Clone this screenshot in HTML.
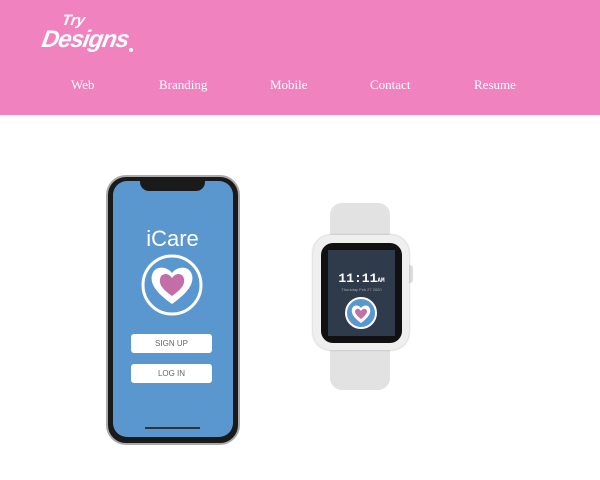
<!DOCTYPE html>
<html><head><style>
body{margin:0;width:600px;height:480px;background:#fff;font-family:"Liberation Serif",serif;overflow:hidden;position:relative}
.hdr{position:absolute;left:0;top:0;width:600px;height:115px;background:#f083bf}
.nav a{position:absolute;top:77px;color:#fff;font-size:13px;text-decoration:none}
.abs{position:absolute}
</style></head><body>
<div class="hdr">
<div class="abs" style="left:62px;top:12px;color:#fff;font:italic bold 15px 'Liberation Sans',sans-serif;transform:skew(-10deg)">Try</div>
<div class="abs" style="left:42px;top:26px;color:#fff;font:italic bold 24px 'Liberation Sans',sans-serif;letter-spacing:-1px;transform:skew(-10deg)">Designs</div>
<div class="abs" style="left:129px;top:48px;width:4px;height:4px;border-radius:50%;background:#fff"></div>
<div class="nav">
<a style="left:71px">Web</a><a style="left:159px">Branding</a><a style="left:270px">Mobile</a><a style="left:370px">Contact</a><a style="left:474px">Resume</a>
</div>
</div>
<!-- phone -->
<div class="abs" style="left:106px;top:175px;width:130px;height:266px;border-radius:20px;background:#1a1a1a;border:2px solid #aaa"></div>
<div class="abs" style="left:113px;top:181px;width:120px;height:256px;border-radius:14px;background:#5b97cf"></div>
<div class="abs" style="left:140px;top:180px;width:65px;height:11px;border-radius:0 0 9px 9px;background:#1a1a1a"></div>
<div class="abs" style="left:0;width:345px;text-align:center;top:226px;color:#fff;font:22px 'Liberation Sans',sans-serif">iCare</div>
<svg class="abs" style="left:0;top:0" width="600" height="480">
<circle cx="172" cy="285" r="29" fill="none" stroke="#fff" stroke-width="3"/>
<path d="M172 304 C155 292 150 283 152 275 C154 266 166 265 172 273 C178 265 190 266 192 275 C194 283 189 292 172 304Z" fill="#fff"/>
<path d="M172 296 C162 289 159 284 160 279 C161 273 168 272 172 278 C176 272 183 273 184 279 C185 284 182 289 172 296Z" fill="#c36ea9"/>
<rect x="145" y="427" width="55" height="2" fill="#333"/>
</svg>
<div class="abs" style="left:131px;top:334px;width:81px;height:19px;background:#fff;border-radius:3px;font:8px 'Liberation Sans',sans-serif;color:#666;text-align:center;line-height:19px">SIGN UP</div>
<div class="abs" style="left:131px;top:364px;width:81px;height:19px;background:#fff;border-radius:3px;font:8px 'Liberation Sans',sans-serif;color:#666;text-align:center;line-height:19px">LOG IN</div>
<!-- watch -->
<div class="abs" style="left:330px;top:203px;width:60px;height:187px;background:#e2e2e2;border-radius:12px"></div>
<div class="abs" style="left:405px;top:265px;width:8px;height:18px;background:#ddd;border-radius:3px"></div>
<div class="abs" style="left:313px;top:235px;width:96px;height:115px;background:#efefef;border-radius:18px;box-shadow:0 0 2px #aaa"></div>
<div class="abs" style="left:321px;top:243px;width:81px;height:100px;background:#111;border-radius:12px"></div>
<div class="abs" style="left:328px;top:250px;width:67px;height:86px;background:#2f3a4a"></div>
<div class="abs" style="left:328px;width:67px;text-align:center;top:271px;color:#fff;font:bold 13px 'Liberation Mono',monospace">11:11<span style="font-size:6px">AM</span></div>
<div class="abs" style="left:328px;width:67px;text-align:center;top:287px;color:#aaa;font:4px sans-serif">Thursday Feb 27 2020</div>
<svg class="abs" style="left:0;top:0" width="600" height="480">
<circle cx="361" cy="313" r="15" fill="#5b97cf" stroke="#fff" stroke-width="2"/>
<path d="M361 323 C353 317 351 313 352 309 C353 305 358 304 361 308 C364 304 369 305 370 309 C371 313 369 317 361 323Z" fill="#fff"/>
<path d="M361 319 C356 315 355 313 355 311 C356 308 359 308 361 311 C363 308 366 308 367 311 C367 313 366 315 361 319Z" fill="#c36ea9"/>
</svg>
</body></html>
